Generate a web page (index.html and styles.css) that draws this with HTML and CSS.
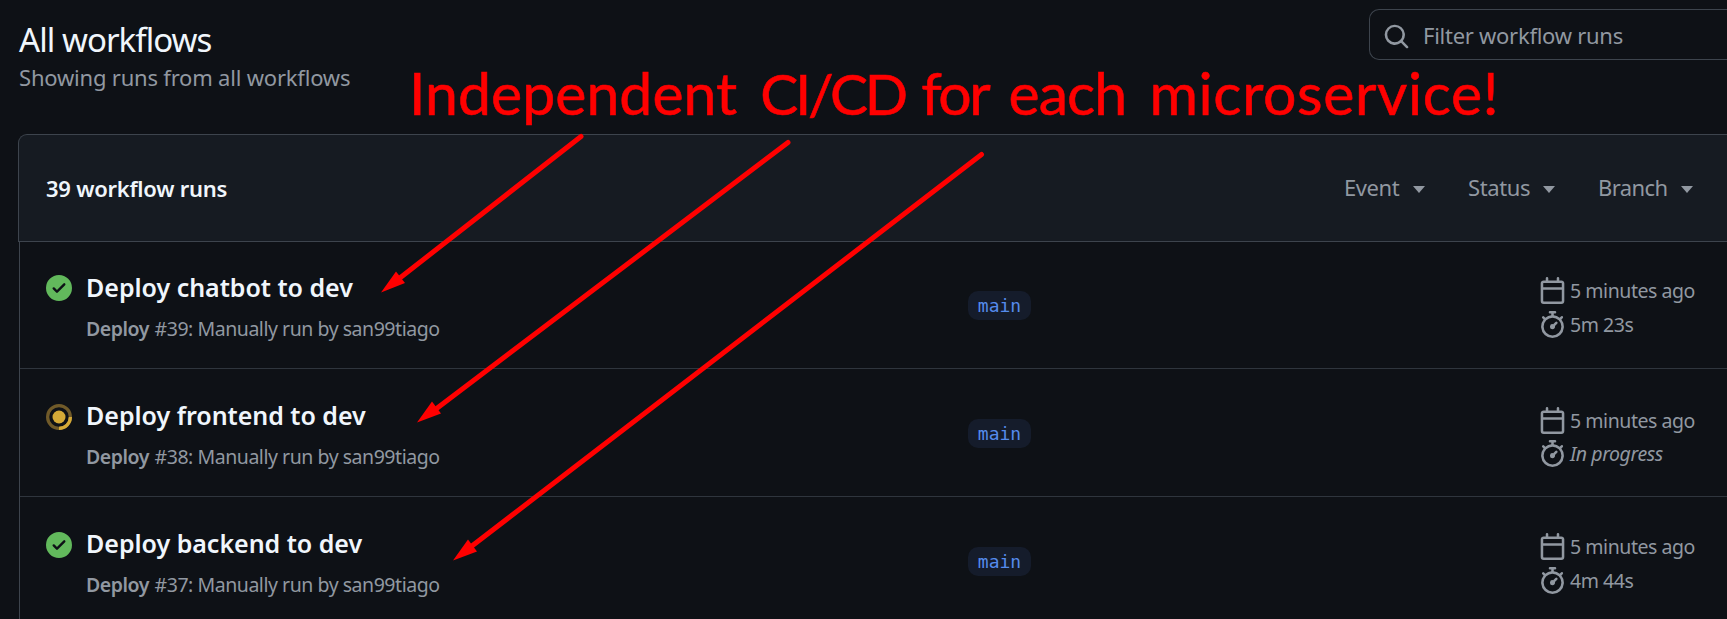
FILE: index.html
```html
<!DOCTYPE html>
<html lang="en">
<head>
<meta charset="utf-8">
<title>All workflows</title>
<link rel="stylesheet" href="styles.css">
</head>
<body>
<svg class="sprite" aria-hidden="true">
  <symbol id="calendar" viewBox="0 0 16 16"><path d="M4.75 0a.75.75 0 0 1 .75.75V2h5V.75a.75.75 0 0 1 1.5 0V2h1.25c.966 0 1.75.784 1.75 1.75v10.5A1.75 1.75 0 0 1 13.25 16H2.75A1.75 1.75 0 0 1 1 14.25V3.75C1 2.784 1.784 2 2.75 2H4V.75A.75.75 0 0 1 4.75 0ZM2.5 7.5v6.75c0 .138.112.25.25.25h10.5a.25.25 0 0 0 .25-.25V7.5Zm10.75-4H2.75a.25.25 0 0 0-.25.25V6h11V3.75a.25.25 0 0 0-.25-.25Z"/></symbol>
  <symbol id="stopwatch" viewBox="0 0 16 16"><path d="M5.75.75A.75.75 0 0 1 6.5 0h3a.75.75 0 0 1 0 1.5h-.75v1l-.001.041a6.724 6.724 0 0 1 3.464 1.435l.007-.006.75-.75a.749.749 0 0 1 1.275.326.749.749 0 0 1-.215.734l-.75.75-.006.007a6.75 6.75 0 1 1-10.548 0L2.72 5.03l-.75-.75a.751.751 0 0 1 .018-1.042.751.751 0 0 1 1.042-.018l.75.75.007.006A6.72 6.72 0 0 1 7.25 2.541V1.5H6.5a.75.75 0 0 1-.75-.75ZM8 14.5a5.25 5.25 0 1 0-.001-10.501A5.25 5.25 0 0 0 8 14.5Zm.389-6.7 1.33-1.33a.75.75 0 1 1 1.061 1.06L9.45 8.861A1.503 1.503 0 0 1 8 10.75a1.499 1.499 0 1 1 .389-2.95Z"/></symbol>
  <symbol id="success" viewBox="0 0 16 16"><path d="M8 16A8 8 0 1 1 8 0a8 8 0 0 1 0 16Zm3.78-9.72a.751.751 0 0 0-.018-1.042.751.751 0 0 0-1.042-.018L6.75 9.19 5.28 7.72a.751.751 0 0 0-1.042.018.751.751 0 0 0-.018 1.042l2 2a.75.75 0 0 0 1.06 0Z"/></symbol>
</svg>
<header class="top">
  <div class="heading">
    <h1 class="title">All workflows</h1>
    <p class="subtitle">Showing runs from all workflows</p>
  </div>
  <div class="filter">
    <svg class="filter-icon" viewBox="0 0 16 16"><path d="M10.68 11.74a6 6 0 0 1-7.922-8.982 6 6 0 0 1 8.982 7.922l3.04 3.04a.749.749 0 0 1-.326 1.275.749.749 0 0 1-.734-.215ZM11.5 7a4.499 4.499 0 1 0-8.997 0A4.499 4.499 0 0 0 11.5 7Z"/></svg>
    <span class="filter-text">Filter workflow runs</span>
  </div>
</header>
<main class="box">
  <div class="box-header">
    <span class="count">39 workflow runs</span>
    <nav class="menus">
      <span class="menu event">Event<i class="caret"></i></span>
      <span class="menu status">Status<i class="caret"></i></span>
      <span class="menu branch">Branch<i class="caret"></i></span>
    </nav>
  </div>
  <div class="rows">
    <section class="row first">
      <svg class="state ok"><use href="#success"/></svg>
      <div class="run">
        <h2 class="run-title">Deploy chatbot to dev</h2>
        <p class="run-meta"><b>Deploy</b> #39: Manually run by san99tiago</p>
      </div>
      <div class="ref"><span class="pill">main</span></div>
      <div class="times">
        <div class="time"><svg><use href="#calendar"/></svg><span>5 minutes ago</span></div>
        <div class="time"><svg><use href="#stopwatch"/></svg><span>5m 23s</span></div>
      </div>
    </section>
    <section class="row second">
      <svg class="state busy" viewBox="0 0 16 16"><circle class="ring" cx="8" cy="8" r="7"/><path class="arc" d="M15 8a7 7 0 0 1-7 7"/><circle class="dot" cx="8" cy="8" r="4"/></svg>
      <div class="run">
        <h2 class="run-title">Deploy frontend to dev</h2>
        <p class="run-meta"><b>Deploy</b> #38: Manually run by san99tiago</p>
      </div>
      <div class="ref"><span class="pill">main</span></div>
      <div class="times">
        <div class="time"><svg><use href="#calendar"/></svg><span>5 minutes ago</span></div>
        <div class="time"><svg><use href="#stopwatch"/></svg><em>In progress</em></div>
      </div>
    </section>
    <section class="row third">
      <svg class="state ok"><use href="#success"/></svg>
      <div class="run">
        <h2 class="run-title">Deploy backend to dev</h2>
        <p class="run-meta"><b>Deploy</b> #37: Manually run by san99tiago</p>
      </div>
      <div class="ref"><span class="pill">main</span></div>
      <div class="times">
        <div class="time"><svg><use href="#calendar"/></svg><span>5 minutes ago</span></div>
        <div class="time"><svg><use href="#stopwatch"/></svg><span>4m 44s</span></div>
      </div>
    </section>
  </div>
</main>
<div class="note">Independent <span class="cicd">CI/CD</span> <span class="for">for</span> <span class="each">each</span> <span class="micro">microservice!</span></div>
<svg class="arrows" viewBox="0 0 1727 619">
  <g class="shafts"><path d="M581 136.500 396 281"/><path d="M788 142.500 432 412"/><path d="M981.500 154.500 468 549"/></g>
  <g class="heads"><path d="M381 292.500 396 271.500 405 283Z"/><path d="M417 422.500 432 401.500 441 413.500Z"/><path d="M453 560.500 468 539.500 477 551.500Z"/></g>
</svg>
</body>
</html>
```
FILE: styles.css
```css
* { box-sizing: border-box; }
body {
  margin: 0;
  width: 1727px;
  height: 619px;
  overflow: hidden;
  position: relative;
  background: #0e1116;
  color: #9198a1;
  font-family: "Noto Sans", "Open Sans", sans-serif;
  white-space: nowrap;
}
h1, h2, p { margin: 0; font-weight: 400; }
.sprite { display: none; }
svg { fill: currentColor; flex: none; }
.top { display: flex; justify-content: space-between; height: 134px; padding-left: 19px; }
.heading { padding-top: 18px; }
.title { font-size: 33px; line-height: 44px; color: #f0f6fc; letter-spacing: -0.950px; }
.subtitle { font-size: 22px; line-height: 31px; letter-spacing: -0.200px; }
.filter {
  display: flex;
  width: 358px;
  height: 51px;
  margin-top: 9px;
  padding: 12px 0 0 13px;
  border: 1px solid #3d444d;
  border-right: 0;
  border-radius: 10px 0 0 10px;
}
.filter-icon { width: 27px; height: 27px; margin-top: 1px; }
.filter-text { margin-left: 13px; font-size: 22px; line-height: 26px; letter-spacing: -0.270px; }
.box-header {
  display: flex;
  justify-content: space-between;
  align-items: center;
  height: 108px;
  margin-left: 18px;
  padding: 0 34px 0 27px;
  background: #161b22;
  border: 1px solid #3d444d;
  border-right: 0;
  border-top-left-radius: 9px;
}
.count { color: #f0f6fc; font-size: 22px; font-weight: 600; letter-spacing: -0.250px; }
.menus { display: flex; margin-top: -2px; font-size: 22px; letter-spacing: -0.400px; }
.menu { display: flex; align-items: center; justify-content: space-between; }
.event { width: 81px; }
.status { width: 87px; margin-left: 43px; }
.branch { width: 95px; margin-left: 43px; letter-spacing: -0.600px; }
.caret { margin-top: 4px; border: 6px solid transparent; border-top: 7px solid #9198a1; border-bottom: 0; }
.rows { margin-left: 19px; border-left: 1px solid #3d444d; }
.row {
  display: grid;
  grid-template-columns: 26px 863px 604px 1fr;
  height: 128px;
  padding-left: 26px;
  border-bottom: 1px solid #2f353d;
}
.first { height: 127px; }
.state { width: 26px; height: 26px; margin-top: 33px; }
.second .state { margin-top: 35px; }
.third .state { margin-top: 35px; }
.ok { color: #62b95c; }
.ring { fill: none; stroke: #705a29; stroke-width: 2; }
.arc { fill: none; stroke: #d4a937; stroke-width: 2; }
.dot { fill: #d4a937; }
.run { padding: 27px 0 0 14px; }
.second .run, .third .run { padding-top: 28px; }
.run-title { color: #f0f6fc; font-size: 25px; line-height: 36px; font-weight: 600; letter-spacing: -0.020px; }
.run-meta { font-size: 19.500px; line-height: 30px; margin-top: 9px; letter-spacing: -0.460px; }
.run-meta b { margin-right: 1px; font-weight: 600; }
.ref { padding: 49px 0 0 33px; }
.second .ref { padding-top: 50px; }
.third .ref { padding-top: 50px; }
.pill {
  display: block;
  width: 63px;
  height: 29px;
  border-radius: 10px;
  background: #151c2b;
  color: #558beb;
  font: 18px/29px "DejaVu Sans Mono", monospace;
  text-align: center;
}
.times { padding-top: 35px; }
.second .times { padding-top: 38px; }
.third .times { padding-top: 36px; }
.time { display: flex; height: 34px; font-size: 19.500px; line-height: 27px; letter-spacing: -0.450px; gap: 4px; }
.second .time { height: 33px; }
.time svg { width: 27px; height: 27px; }
.note {
  position: absolute;
  left: 409px;
  top: 57px;
  color: #f00;
  font: 59px/72px Lato, sans-serif;
  -webkit-text-stroke: 0.600px #f00;
}
.cicd { margin-left: 8px; font-size: 57px; letter-spacing: -3.200px; }
.for { margin-left: 1px; letter-spacing: -2.500px; }
.each { margin-left: 5px; letter-spacing: -0.900px; }
.micro { margin-left: 8px; letter-spacing: 0.600px; }
.arrows { position: absolute; left: 0; top: 0; width: 1727px; height: 619px; }
.shafts { fill: none; stroke: #f00; stroke-width: 5; stroke-linecap: round; }
.heads { fill: #f00; }
```
